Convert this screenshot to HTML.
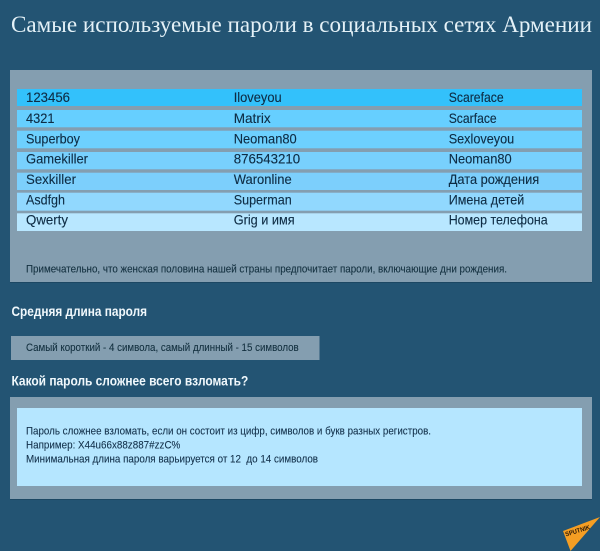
<!DOCTYPE html>
<html lang="ru">
<head>
<meta charset="utf-8">
<title>Самые используемые пароли</title>
<style>
html,body{margin:0;padding:0;background:#235473;width:600px;height:551px;overflow:hidden}
svg{display:block;filter:blur(.3px)}
text{font-family:"Liberation Sans","DejaVu Sans",sans-serif;fill:#0e2c44}
.t{font-size:14px;stroke:#0e2c44;stroke-width:.12px}
.s{font-size:11.3px;fill:#13303f;stroke:#13303f;stroke-width:.1px}
.h{font-size:14.2px;font-weight:bold;fill:#f0f8fc}
.m{font-size:11.3px;fill:#12304a;stroke:#12304a;stroke-width:.1px}
</style>
</head>
<body>
<svg width="600" height="551" viewBox="0 0 600 551">
<rect width="600" height="551" fill="#235473"/>
<text x="11" y="32" textLength="581" lengthAdjust="spacingAndGlyphs" style="font-family:'Liberation Serif',serif;font-size:23px;fill:#e4f1f7">Самые используемые пароли в социальных сетях Армении</text>

<rect x="10" y="70" width="582" height="212" fill="#849eb0"/>
<rect x="10" y="282" width="582" height="1" fill="#1c4763"/>
<rect x="17" y="89" width="565" height="17" fill="#33c1fb"/>
<rect x="17" y="110" width="565" height="17.3" fill="#66cfff"/>
<rect x="17" y="130.7" width="565" height="17.6" fill="#6dd0fe"/>
<rect x="17" y="152" width="565" height="17.3" fill="#78d0fd"/>
<rect x="17" y="172.7" width="565" height="17.3" fill="#7ccffc"/>
<rect x="17" y="192.7" width="565" height="18" fill="#91d8fe"/>
<rect x="17" y="213.3" width="565" height="17.7" fill="#b8e7ff"/>

<text class="t" x="26" y="102" textLength="44" lengthAdjust="spacingAndGlyphs">123456</text>
<text class="t" x="233.7" y="102" textLength="48" lengthAdjust="spacingAndGlyphs">Iloveyou</text>
<text class="t" x="448.7" y="102" textLength="55" lengthAdjust="spacingAndGlyphs">Scareface</text>

<text class="t" x="26" y="123" textLength="28.5" lengthAdjust="spacingAndGlyphs">4321</text>
<text class="t" x="233.7" y="123" textLength="37" lengthAdjust="spacingAndGlyphs">Matrix</text>
<text class="t" x="448.7" y="123" textLength="48" lengthAdjust="spacingAndGlyphs">Scarface</text>

<text class="t" x="26" y="143.5" textLength="54" lengthAdjust="spacingAndGlyphs">Superboy</text>
<text class="t" x="233.7" y="143.5" textLength="63" lengthAdjust="spacingAndGlyphs">Neoman80</text>
<text class="t" x="448.7" y="143.5" textLength="65.5" lengthAdjust="spacingAndGlyphs">Sexloveyou</text>

<text class="t" x="26" y="163.5" textLength="62" lengthAdjust="spacingAndGlyphs">Gamekiller</text>
<text class="t" x="233.7" y="163.5" textLength="66.5" lengthAdjust="spacingAndGlyphs">876543210</text>
<text class="t" x="448.7" y="163.5" textLength="63" lengthAdjust="spacingAndGlyphs">Neoman80</text>

<text class="t" x="26" y="184" textLength="50" lengthAdjust="spacingAndGlyphs">Sexkiller</text>
<text class="t" x="233.7" y="184" textLength="58" lengthAdjust="spacingAndGlyphs">Waronline</text>
<text class="t" x="448.7" y="184" textLength="90.5" lengthAdjust="spacingAndGlyphs">Дата рождения</text>

<text class="t" x="26" y="204.5" textLength="39" lengthAdjust="spacingAndGlyphs">Asdfgh</text>
<text class="t" x="233.7" y="204.5" textLength="58" lengthAdjust="spacingAndGlyphs">Superman</text>
<text class="t" x="448.7" y="204.5" textLength="75.6" lengthAdjust="spacingAndGlyphs">Имена детей</text>

<text class="t" x="26" y="224.5" textLength="42" lengthAdjust="spacingAndGlyphs">Qwerty</text>
<text class="t" x="233.7" y="224.5" textLength="61" lengthAdjust="spacingAndGlyphs">Grig и имя</text>
<text class="t" x="448.7" y="224.5" textLength="99" lengthAdjust="spacingAndGlyphs">Номер телефона</text>

<text class="s" x="26" y="272.5" textLength="481" lengthAdjust="spacingAndGlyphs">Примечательно, что женская половина нашей страны предпочитает пароли, включающие дни рождения.</text>

<text class="h" x="11.5" y="316" textLength="135.5" lengthAdjust="spacingAndGlyphs">Средняя длина пароля</text>

<rect x="11" y="336" width="308.5" height="24" fill="#849eb0"/>
<text class="s" x="26" y="351" textLength="272.7" lengthAdjust="spacingAndGlyphs">Самый короткий - 4 символа, самый длинный - 15 символов</text>

<text class="h" x="11.5" y="385.7" textLength="236.8" lengthAdjust="spacingAndGlyphs">Какой пароль сложнее всего взломать?</text>

<rect x="10" y="397" width="582" height="102" fill="#849eb0"/>
<rect x="10" y="499" width="582" height="1" fill="#1c4763"/>
<rect x="17" y="408" width="565" height="78" fill="#b5e6ff"/>
<text class="m" x="26" y="434.3" textLength="405" lengthAdjust="spacingAndGlyphs">Пароль сложнее взломать, если он состоит из цифр, символов и букв разных регистров.</text>
<text class="m" x="26" y="448.7" textLength="154.3" lengthAdjust="spacingAndGlyphs">Например: X44u66x88z887#zzC%</text>
<text class="m" x="26" y="462.7" textLength="292" lengthAdjust="spacingAndGlyphs">Минимальная длина пароля варьируется от 12&#160; до 14 символов</text>

<polygon points="600,517 563,531 570.5,551" fill="#f59e23"/>
<text x="566" y="536.5" transform="rotate(-17 566 536.5)" textLength="25.5" lengthAdjust="spacingAndGlyphs" style="font-size:6.5px;font-weight:bold;fill:#2c1a08">SPUTNIK</text>
</svg>
</body>
</html>
